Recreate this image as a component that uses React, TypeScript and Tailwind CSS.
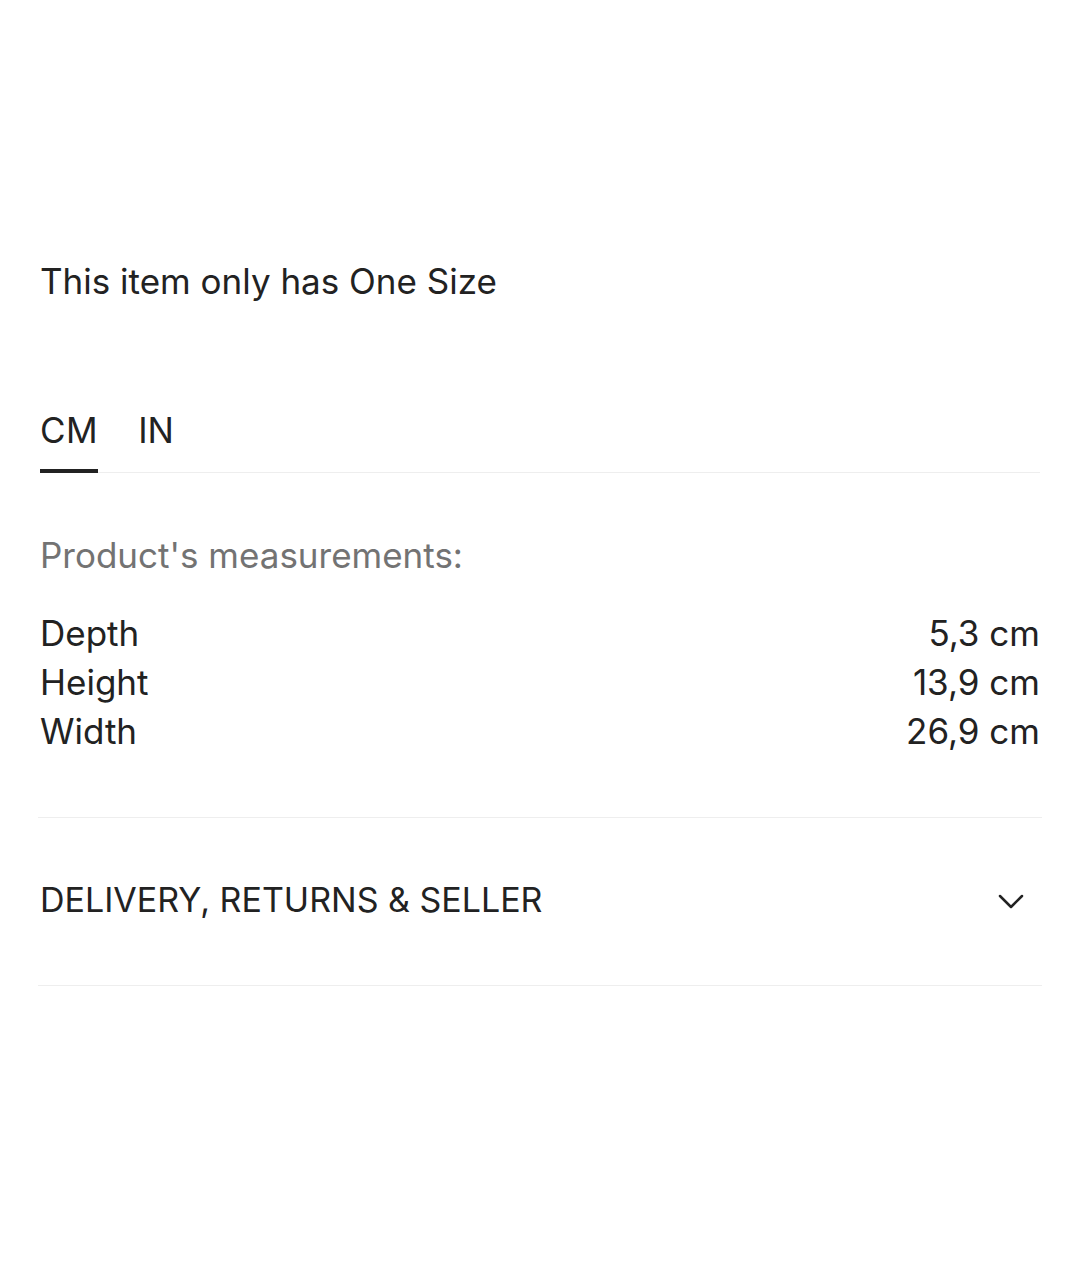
export default function App() {
  const rows = [
    { label: "Depth", value: "5,3 cm" },
    { label: "Height", value: "13,9 cm" },
    { label: "Width", value: "26,9 cm" },
  ];

  return (
    <div className="min-h-[1280px] w-[1080px] bg-white px-[40px] text-[#222222] font-['Inter',sans-serif]">
      <div className="pt-[259px]">
        <p className="text-[35px] leading-[44px]">This item only has One Size</p>
      </div>

      <div className="mt-[107px] flex items-end border-b border-[#eeeeee]">
        <button className="border-b-4 border-[#222222] -mb-[1px] pb-[19px] text-[35px] leading-[40px] tracking-[0.5px]">
          CM
        </button>
        <button className="ml-[40px] border-b-4 border-transparent -mb-[1px] pb-[19px] text-[35px] leading-[40px]">
          IN
        </button>
      </div>

      <p className="mt-[60px] text-[35px] leading-[44px] text-[#737373]">
        Product's measurements:
      </p>

      <div className="mt-[32px] flex flex-col">
        {rows.map((row) => (
          <div key={row.label} className="flex justify-between text-[35px] leading-[49px]">
            <span>{row.label}</span>
            <span>{row.value}</span>
          </div>
        ))}
      </div>

      <div className="mt-[61px] border-t border-b border-[#eeeeee] -mx-[2px]">
        <div className="flex h-[167px] items-center justify-between px-[2px]">
          <span className="text-[34px] leading-[40px] -mt-[4px]">DELIVERY, RETURNS &amp; SELLER</span>
          <svg width="26" height="16" viewBox="0 0 26 16" className="mr-[16px]" fill="none">
            <path d="M2 2 L13 13 L24 2" stroke="#222222" strokeWidth="2.5" strokeLinecap="round" strokeLinejoin="round" />
          </svg>
        </div>
      </div>
    </div>
  );
}
